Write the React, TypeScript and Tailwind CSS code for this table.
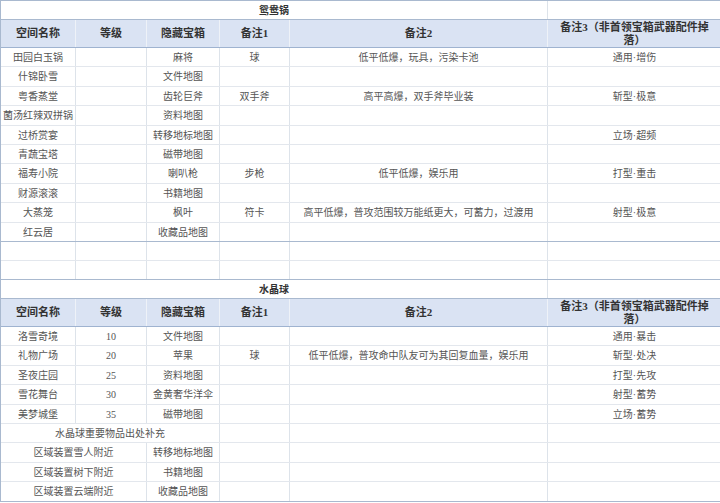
import type { ReactNode } from 'react';

const font = "font-['Liberation_Serif','Noto_Sans_CJK_SC',serif]";

// column widths: 名称 / 等级 / 宝箱 / 备注1 / 备注2 / 备注3
const W = ['w-[75px]', 'w-[71px]', 'w-[73px]', 'w-[70px]', 'w-[258px]', 'w-[173px]'];

type Row = [string, string, string, string, string, string];

const hotpot: Row[] = [
  ['田园白玉锅', '', '麻将', '球', '低平低爆，玩具，污染卡池', '通用·增伤'],
  ['什锦卧雪', '', '文件地图', '', '', ''],
  ['粤香蒸堂', '', '齿轮巨斧', '双手斧', '高平高爆，双手斧毕业装', '斩型·极意'],
  ['菌汤红辣双拼锅', '', '资料地图', '', '', ''],
  ['过桥赏宴', '', '转移地标地图', '', '', '立场·超频'],
  ['青蔬宝塔', '', '磁带地图', '', '', ''],
  ['福寿小院', '', '喇叭枪', '步枪', '低平低爆，娱乐用', '打型·重击'],
  ['财源滚滚', '', '书籍地图', '', '', ''],
  ['大蒸笼', '', '枫叶', '符卡', '高平低爆，普攻范围较万能纸更大，可蓄力，过渡用', '射型·极意'],
  ['红云居', '', '收藏品地图', '', '', ''],
];
const hotpotH = ['h-[19px]', 'h-[20px]', 'h-[19px]', 'h-[20px]', 'h-[19px]', 'h-[19px]', 'h-[20px]', 'h-[19px]', 'h-[20px]', 'h-[19px]'];

const crystal: Row[] = [
  ['洛雪奇境', '10', '文件地图', '', '', '通用·暴击'],
  ['礼物广场', '20', '苹果', '球', '低平低爆，普攻命中队友可为其回复血量，娱乐用', '斩型·处决'],
  ['圣夜庄园', '25', '资料地图', '', '', '打型·先攻'],
  ['雪花舞台', '30', '金黄奢华洋伞', '', '', '射型·蓄势'],
  ['美梦城堡', '35', '磁带地图', '', '', '立场·蓄势'],
];

const extras = [
  ['区域装置雪人附近', '转移地标地图'],
  ['区域装置树下附近', '书籍地图'],
  ['区域装置云端附近', '收藏品地图'],
];

function Cell({ w, children, last, className = '' }: { w: string; children?: ReactNode; last?: boolean; className?: string }) {
  return (
    <div
      className={`${w} shrink-0 h-full flex items-center justify-center text-center whitespace-nowrap ${last ? '' : 'border-r border-[#dde3ea]'} ${className}`}
    >
      {children}
    </div>
  );
}

function DataRow({ row, h, strong }: { row: Row; h: string; strong?: boolean }) {
  return (
    <div className={`flex ${h} border-b ${strong ? 'border-[#a9b9cf]' : 'border-[#e3e7ed]'} text-[10px] text-[#555]`}>
      {row.map((v, i) => (
        <Cell key={i} w={W[i]} last={i === 5}>
          {v}
        </Cell>
      ))}
    </div>
  );
}

function TitleRow({ title }: { title: string }) {
  return (
    <div className="flex h-[19px] border-b border-[#a9b9cf]">
      <div className="w-[547px] shrink-0 flex items-center justify-center border-r border-[#dde3ea] text-[10px] font-bold text-[#333]">
        {title}
      </div>
      <div className="flex-1" />
    </div>
  );
}

function HeaderRow() {
  const heads = ['空间名称', '等级', '隐藏宝箱', '备注1', '备注2'];
  return (
    <div className="flex h-[28px] bg-[#dae3f3] border-b border-[#9fb3d0] text-[11px] font-bold text-[#333]">
      {heads.map((v, i) => (
        <div key={i} className={`${W[i]} shrink-0 flex items-center justify-center border-r border-[#eef2f8]`}>
          {v}
        </div>
      ))}
      <div className={`${W[5]} shrink-0 flex items-center justify-center text-center leading-[13px]`}>
        备注3（非首领宝箱武器配件掉
        <br />
        落）
      </div>
    </div>
  );
}

function EmptyRow({ h, strong }: { h: string; strong?: boolean }) {
  return <DataRow row={['', '', '', '', '', '']} h={h} strong={strong} />;
}

export default function App() {
  return (
    <div className={`w-[720px] h-[503px] overflow-hidden bg-white ${font}`}>
      <div className="border-l border-t border-b border-[#a9b9cf]">
        <TitleRow title="鸳鸯锅" />
        <HeaderRow />
        {hotpot.map((r, i) => (
          <DataRow key={r[0]} row={r} h={hotpotH[i]} strong={i === hotpot.length - 1} />
        ))}
        <EmptyRow h="h-[19px]" />
        <EmptyRow h="h-[19px]" strong />

        <TitleRow title="水晶球" />
        <HeaderRow />
        {crystal.map((r, i) => (
          <DataRow key={r[0]} row={r} h={['h-[19px]', 'h-[20px]', 'h-[19px]', 'h-[20px]', 'h-[19px]'][i]} />
        ))}
        <div className="flex h-[19px] border-b border-[#e3e7ed] text-[10px] text-[#555]">
          <Cell w="w-[219px]">水晶球重要物品出处补充</Cell>
          <Cell w={W[3]} />
          <Cell w={W[4]} />
          <Cell w={W[5]} last />
        </div>
        {extras.map((e, i) => (
          <div
            key={e[0]}
            className={`flex ${['h-[20px]', 'h-[19px]', 'h-[19px]'][i]} ${i === 2 ? '' : 'border-b border-[#e3e7ed]'} text-[10px] text-[#555]`}
          >
            <Cell w="w-[146px]">{e[0]}</Cell>
            <Cell w={W[2]}>{e[1]}</Cell>
            <Cell w={W[3]} />
            <Cell w={W[4]} />
            <Cell w={W[5]} last />
          </div>
        ))}
      </div>
    </div>
  );
}
